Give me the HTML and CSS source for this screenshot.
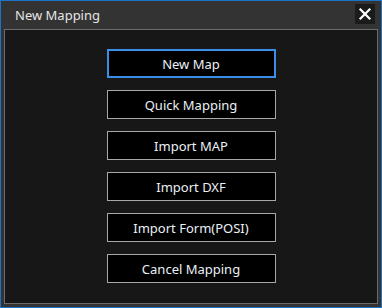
FILE: index.html
```html
<!DOCTYPE html>
<html lang="en">
<head>
<meta charset="UTF-8">
<title>New Mapping</title>
<link rel="stylesheet" href="styles.css">
</head>
<body>

<div class="window">
    <div class="titlebar">
        <span class="title">New Mapping</span>
        <button class="close" title="Close">
            <svg width="14" height="14" viewBox="0 0 14 14">
                <path d="M2.5 2.5 L11.5 11.5 M11.5 2.5 L2.5 11.5" stroke="#ffffff" stroke-width="2.2" stroke-linecap="square"/>
            </svg>
        </button>
    </div>

    <div class="panel">
        <button class="btn active">New Map</button>
        <button class="btn">Quick Mapping</button>
        <button class="btn">Import MAP</button>
        <button class="btn">Import DXF</button>
        <button class="btn">Import Form(POSI)</button>
        <button class="btn">Cancel Mapping</button>
    </div>
</div>

</body>
</html>
```

FILE: styles.css
```css
body {
    margin: 0;
    padding: 0;
    font-family: 'Noto Sans', 'Open Sans', sans-serif;
    background-color: #333333;
}
.window {
    width: 382px;
    height: 308px;
    box-sizing: border-box;
    border: 1px solid #1c74c9;
    background-color: #333333;
    display: flex;
    flex-direction: column;
}
.titlebar {
    height: 28px;
    display: flex;
    align-items: center;
    justify-content: space-between;
    padding: 0 6px 0 14px;
}
.title {
    color: #e6e6e6;
    font-size: 13px;
    margin-top: -1px;
}
.close {
    width: 20px;
    height: 20px;
    padding: 0;
    border: none;
    background-color: #1b1b1b;
    display: flex;
    align-items: center;
    justify-content: center;
    margin-top: -3px;
    cursor: pointer;
}
.panel {
    flex: 1;
    margin: 0 3px 3px 3px;
    border: 1px solid #6b6b6b;
    background-color: #171717;
    display: flex;
    flex-direction: column;
    align-items: center;
    gap: 12px;
    padding-top: 19px;
}
.btn {
    width: 169px;
    height: 29px;
    box-sizing: border-box;
    background-color: #000000;
    border: 1px solid #a8a8a8;
    color: #eaf0f6;
    font-family: 'Noto Sans', 'Open Sans', sans-serif;
    font-size: 13px;
    padding: 0;
    cursor: pointer;
}
.btn.active {
    border: 2px solid #3b8ee8;
}
```
